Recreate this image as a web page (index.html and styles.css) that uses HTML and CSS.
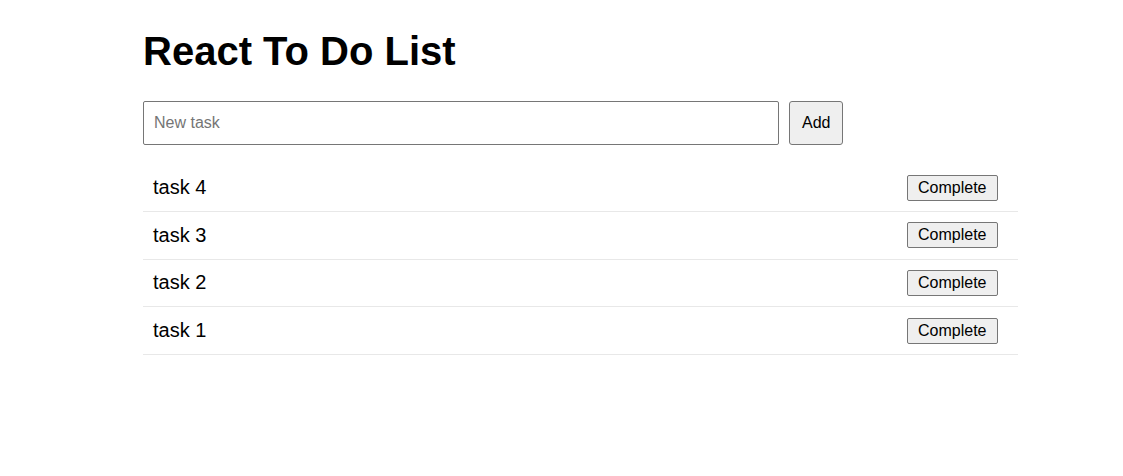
FILE: index.html
```html
<!DOCTYPE html>
<html>
<head>
<meta charset="utf-8">
<title>React To Do List</title>
<link rel="stylesheet" href="styles.css">
</head>
<body>
<div class="app">
  <h1 class="title">React To Do List</h1>
  <form class="add-form">
    <input class="task-input" type="text" placeholder="New task">
    <button class="add-btn" type="button">Add</button>
  </form>
  <ul class="task-list">
    <li class="task"><span class="task-text">task 4</span><button class="complete-btn" type="button">Complete</button></li>
    <li class="task"><span class="task-text">task 3</span><button class="complete-btn" type="button">Complete</button></li>
    <li class="task"><span class="task-text">task 2</span><button class="complete-btn" type="button">Complete</button></li>
    <li class="task"><span class="task-text">task 1</span><button class="complete-btn" type="button">Complete</button></li>
  </ul>
</div>
</body>
</html>
```
FILE: styles.css
```css
html, body {
  margin: 0;
  padding: 0;
  background: #ffffff;
}
body {
  font-family: "Liberation Sans", Arial, sans-serif;
  color: #000;
}
.app {
  width: 875px;
  margin-left: 143px;
  padding-top: 28px;
}
.title {
  font-size: 40px;
  font-weight: bold;
  line-height: 46px;
  margin: 0 0 27px 0;
}
.add-form {
  display: flex;
  gap: 10px;
  margin: 0;
}
.task-input {
  width: 636px;
  box-sizing: border-box;
  height: 44px;
  padding: 12px 10px;
  font-family: "Liberation Sans", Arial, sans-serif;
  font-size: 16px;
  border: 1px solid #767676;
  border-radius: 2px;
  outline: none;
}
.task-input::placeholder {
  color: #757575;
}
.add-btn {
  height: 44px;
  box-sizing: border-box;
  padding: 0 12px;
  font-family: "Liberation Sans", Arial, sans-serif;
  font-size: 16px;
  color: #000;
  background: #efefef;
  border: 1px solid #767676;
  border-radius: 3px;
}
.task-list {
  list-style: none;
  margin: 19.3px 0 0 0;
  padding: 0;
}
.task {
  display: flex;
  justify-content: space-between;
  align-items: center;
  padding: 10.33px 20px 10.33px 10px;
  border-bottom: 1px solid #e8e8e8;
}
.task-text {
  font-size: 20px;
  line-height: 23px;
}
.complete-btn {
  height: 26px;
  box-sizing: border-box;
  padding: 0 10.5px;
  font-family: "Liberation Sans", Arial, sans-serif;
  font-size: 16px;
  color: #000;
  background: #efefef;
  border: 1px solid #767676;
  border-radius: 2px;
}
```
